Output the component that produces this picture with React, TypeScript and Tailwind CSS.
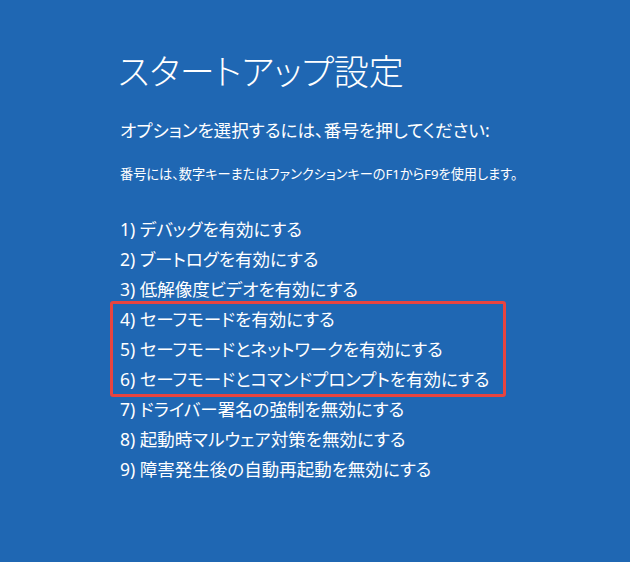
const options = [
  '1) デバッグを有効にする',
  '2) ブートログを有効にする',
  '3) 低解像度ビデオを有効にする',
  '4) セーフモードを有効にする',
  '5) セーフモードとネットワークを有効にする',
  '6) セーフモードとコマンドプロンプトを有効にする',
  '7) ドライバー署名の強制を無効にする',
  '8) 起動時マルウェア対策を無効にする',
  '9) 障害発生後の自動再起動を無効にする',
];

function Option({ label }: { label: string }) {
  return <div className="h-[30px] leading-[30px] whitespace-nowrap">{label}</div>;
}

export default function App() {
  return (
    <div
      className="w-[630px] h-[562px] bg-[#1f67b3] text-white overflow-hidden [font-feature-settings:'palt']"
      style={{ fontFamily: '"Noto Sans", "Noto Sans CJK JP", sans-serif' }}
    >
      <div className="pl-[118px] pt-[44px]">
        <h1 className="text-[35px] leading-[56px] font-light">スタートアップ設定</h1>
        <p className="mt-[16px] pl-[2px] text-[17.6px] leading-[28px]">
          オプションを選択するには、番号を押してください:
        </p>
        <p className="mt-[20px] pl-[2px] text-[13.2px] leading-[20px]">
          番号には、数字キーまたはファンクションキーのF1からF9を使用します。
        </p>

        <div className="mt-[30px] pl-[2px] text-[17.5px]">
          {options.slice(0, 3).map((o) => (
            <Option key={o} label={o} />
          ))}

          {/* highlighted safe-mode group */}
          <div className="-ml-[10px] w-[396px] border-[3px] border-[#e8443f] rounded-[3px] pl-[7px] -my-[3px]">
            {options.slice(3, 6).map((o) => (
              <Option key={o} label={o} />
            ))}
          </div>

          {options.slice(6).map((o) => (
            <Option key={o} label={o} />
          ))}
        </div>
      </div>
    </div>
  );
}
